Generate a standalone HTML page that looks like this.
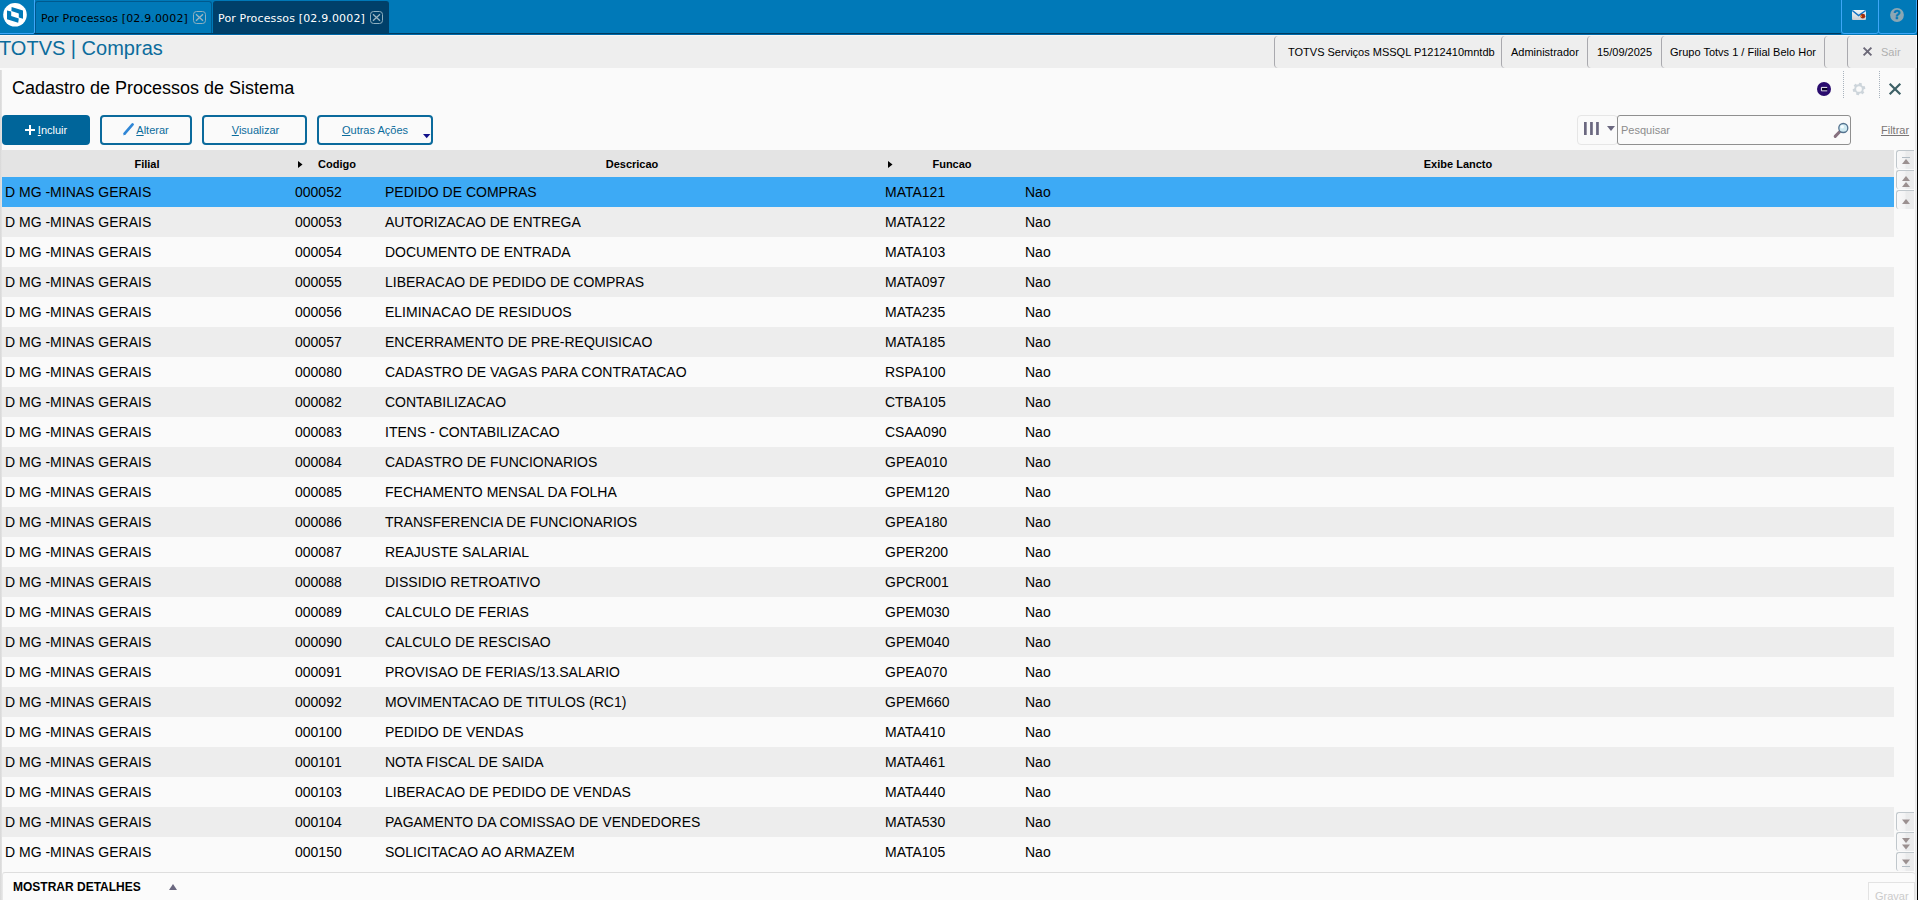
<!DOCTYPE html>
<html lang="pt-BR">
<head>
<meta charset="utf-8">
<title>TOTVS | Compras</title>
<style>
*{box-sizing:border-box;margin:0;padding:0}
html,body{width:1918px;height:900px;overflow:hidden;background:#fafafa;font-family:"Liberation Sans",sans-serif;color:#000}
.abs{position:absolute}
#topbar{position:absolute;left:0;top:0;width:1918px;height:35px;background:linear-gradient(to bottom,#0079b8 0 33px,#003c60 33px 34px,#0069a9 34px 35px)}
#logo{position:absolute;left:0;top:0;width:34px;height:33px}
.tab{position:absolute;top:1px;height:32px;width:177px;border-radius:3px 3px 0 0;font-family:"DejaVu Sans","Liberation Sans",sans-serif;font-size:11px;letter-spacing:.15px;line-height:34px;padding-left:5px;white-space:nowrap;border:1px solid transparent;border-bottom:none}
#tab1{left:35px;background:#0079b8;border-color:#005a8e;color:#000}
#tab2{left:213px;width:176px;padding-left:4px;background:#00406a;border-color:#00406a;color:#fff}
.tabx{position:absolute;left:157px;top:9px;width:13px;height:13px}
#statusbar{position:absolute;left:0;top:35px;width:1916px;height:33px;background:#eeeeee;border-top:1px solid #fbf6f3}
#brand{position:absolute;left:-1px;top:35px;font-size:20px;line-height:26px;color:#0c6c9c;white-space:nowrap}
.sb{position:absolute;top:36px;height:32px;border-left:1px solid #a9a9ae;border-radius:4px 0 0 4px;font-size:11px;line-height:32px;white-space:nowrap;color:#000}
#title{position:absolute;left:12px;top:77px;font-size:18px;line-height:22px;white-space:nowrap}
#leftedge{position:absolute;left:0;top:70px;width:2px;height:830px;background:linear-gradient(to right,#d7d7d7,#e5e5e5)}
#rightedge{position:absolute;left:1917px;top:0;width:1px;height:900px;background:#000}
#rightedge2{position:absolute;left:1915px;top:68px;width:2px;height:832px;background:linear-gradient(to right,#e6e6e6,#efefef)}
.btn{position:absolute;top:115px;height:30px;border:2px solid #0a6a9c;border-radius:4px;font-size:11px;line-height:26px;text-align:center;color:#0c6c9c;background:#fafafa;white-space:nowrap}
.btn u{text-decoration:underline}
#b1{left:2px;width:88px;background:#00659a;border-color:#00659a;color:#fff}
#b2{left:100px;width:92px}
#b3{left:202px;width:105px}
#b4{left:317px;width:116px}
#ghead{position:absolute;left:2px;top:150px;width:1892px;height:27px;background:#e4e4e4;font-weight:bold;font-size:11px;line-height:27px}
#ghead span{position:absolute;top:1px;text-align:center}
.row{position:absolute;left:2px;width:1892px;height:30px;font-size:14px;line-height:30px;background:#fafafa;white-space:nowrap}
.row.odd{background:#ededed}
.row.sel{background:#3daaf5}
.row span{position:absolute;top:0}
.c1{left:3px}.c2{left:293px}.c3{left:383px}.c4{left:883px}.c5{left:1023px}
#footer{position:absolute;left:2px;top:872px;width:1913px;height:29px;border-top:1px solid #dedede;border-left:1px solid #e8e8e8;border-radius:3px 3px 0 0;background:#fbfbfb}
#footer b{position:absolute;left:10px;top:7px;font-size:12px;line-height:14px}
svg{position:absolute;overflow:visible}
.tb{position:absolute;top:-1px;height:35px;border:1px solid #3ea6f7;border-radius:0 0 3px 3px}
.dots{position:absolute;top:71px;width:1px;height:28px;background:repeating-linear-gradient(to bottom,#a9b3bd 0 1px,transparent 1px 2px)}
.scb{position:absolute;left:1896px;width:18px;height:19px;border-left:1px solid #c0c7cc;border-top:1px solid #c0c7cc;border-radius:3px 0 0 3px;background:linear-gradient(to right,#f9f9f9,#f3f3f4 45%,#eaebec 55%,#ececed)}
#colsel{position:absolute;left:1577px;top:115px;width:41px;height:30px;border:1px solid #e6e6e6;border-radius:4px;background:#fafafa}
#search{position:absolute;left:1617px;top:115px;width:234px;height:30px;border:1px solid #8f8f8f;border-radius:3px;background:#fafafa;font-size:11px;line-height:28px;padding-left:3px;color:#8c8c8c}
#filtrar{position:absolute;left:1881px;top:123px;font-size:11px;line-height:14px;color:#7a7676;text-decoration:underline}
#gravar{position:absolute;left:1868px;top:882px;width:47px;height:20px;border:1px solid #e3e3e3;background:#fcfcfc;font-size:11px;line-height:14px;padding:6px 0 0 6px;color:#cbcbcb}
</style>
</head>
<body>
<div id="topbar"></div>
<div id="logo" style="position:absolute;left:-1px;top:-1px;width:36px;height:35px;border:1px solid #3ea6f7;border-radius:0 0 2px 0"></div>
<svg style="left:0;top:0" width="34" height="33" viewBox="0 0 34 33"><circle cx="15" cy="14.8" r="11.8" fill="#fff"/><path d="M11.6 7 L23 10.6 L23 18.8 L18.8 17.6 L18.8 13.4 L11.4 11 Z M7 10.6 L11.2 11.6 L11.2 16 L18.8 18.5 L18.2 22.8 L7 19.2 Z" fill="#0079b8"/></svg>
<div id="tab1" class="tab">Por Processos [02.9.0002]<svg class="tabx" width="13" height="13" viewBox="0 0 13 13"><rect x=".5" y=".5" width="12" height="12" rx="3" fill="none" stroke="#8fb0c0"/><path d="M3 3.2 L10 9.8 M10 3.2 L3 9.8" stroke="#9db6c2" stroke-width="1.3" fill="none"/></svg></div>
<div id="tab2" class="tab">Por Processos [02.9.0002]<svg class="tabx" style="left:156px" width="13" height="13" viewBox="0 0 13 13"><rect x=".5" y=".5" width="12" height="12" rx="3" fill="none" stroke="#8fb0c0"/><path d="M3 3.2 L10 9.8 M10 3.2 L3 9.8" stroke="#9db6c2" stroke-width="1.3" fill="none"/></svg></div>
<div style="position:absolute;left:1841px;top:32px;width:76px;height:3px;background:#0079b8"></div>
<div class="tb" style="left:1841px;width:38px"></div>
<div class="tb" style="left:1878px;width:39px"></div>
<svg style="left:1852px;top:10px" width="14" height="10" viewBox="0 0 14 10"><defs><linearGradient id="mg" x1="0" y1="0" x2="0" y2="1"><stop offset="0" stop-color="#eef7fa"/><stop offset="1" stop-color="#c9ced3"/></linearGradient></defs><rect width="14" height="10" rx="1" fill="url(#mg)"/><path d="M.3 .5 L6.6 5.6 L13.7 .5" fill="none" stroke="#1271c2" stroke-width="1.5"/><circle cx="10.8" cy="6.2" r="2.4" fill="#a22c0e"/><circle cx="9.2" cy="6.4" r=".8" fill="#f0a030"/></svg>
<svg style="left:1890px;top:8px" width="14" height="14" viewBox="0 0 14 14"><circle cx="7" cy="7" r="6.9" fill="#8ba7b4"/><text x="7" y="11" text-anchor="middle" font-family="Liberation Sans,sans-serif" font-weight="bold" font-size="12" fill="#0079b8" stroke="#0079b8" stroke-width=".5">?</text></svg>
<div id="statusbar"></div>
<div id="brand">TOTVS | Compras</div>
<div class="sb" style="left:1274px;width:228px;padding-left:13px">TOTVS Serviços MSSQL P1212410mntdb</div>
<div class="sb" style="left:1501px;width:87px;padding-left:9px">Administrador</div>
<div class="sb" style="left:1587px;width:75px;padding-left:9px">15/09/2025</div>
<div class="sb" style="left:1661px;width:164px;padding-left:8px">Grupo Totvs 1 / Filial Belo Hor</div>
<div class="sb" style="left:1824px;width:24px"></div>
<div class="sb" style="left:1847px;width:69px;padding-left:33px;color:#b0b0b0">Sair</div>
<svg style="left:1863px;top:47px" width="9" height="9" viewBox="0 0 9 9"><path d="M.6 .6 L8.4 8.4 M8.4 .6 L.6 8.4" stroke="#6b6878" stroke-width="1.9" fill="none"/></svg>
<div id="leftedge"></div>
<div id="title">Cadastro de Processos de Sistema</div>
<svg style="left:1817px;top:82px" width="14" height="14" viewBox="0 0 14 14"><circle cx="7" cy="7" r="7" fill="#2a0c6e"/><path d="M10.2 5.4 H4.4 V8.8 H10.2" fill="none" stroke="#f2f2f2" stroke-width="1"/><path d="M5 6 H10.2 V8.2 H5 Z" fill="#0a0428"/></svg>
<div class="dots" style="left:1843px"></div>
<div class="dots" style="left:1879px"></div>
<svg style="left:1852px;top:82px" width="14" height="14" viewBox="-7 -7 14 14"><g fill="#cdd5db" transform="rotate(15)"><g id="gt"><rect x="-1.5" y="-6.3" width="3" height="3" rx=".6"/><rect x="-1.5" y="3.3" width="3" height="3" rx=".6"/></g><use href="#gt" transform="rotate(60)"/><use href="#gt" transform="rotate(120)"/></g><circle r="3.8" fill="none" stroke="#cdd5db" stroke-width="1.9"/></svg>
<svg style="left:1889px;top:83px" width="12" height="12" viewBox="0 0 12 12"><path d="M.7 .7 L11.3 11.3 M11.3 .7 L.7 11.3" stroke="#3d6066" stroke-width="2.2" fill="none"/></svg>
<div id="b1" class="btn"><svg style="left:21px;top:7.5px" width="10" height="10" viewBox="0 0 10 10"><path d="M5 0V10M0 5H10" stroke="#fff" stroke-width="2" fill="none"/></svg><span style="padding-left:13px"><u>I</u>ncluir</span></div>
<div id="b2" class="btn"><svg style="left:21px;top:6px" width="12" height="13" viewBox="0 0 12 13"><path d="M1.6 10.6 L9.6 1.4" stroke="#2f86d6" stroke-width="2.7" stroke-linecap="round" fill="none"/><path d="M.4 12.4 L.9 10.2 L2.4 11.4Z" fill="#2f86d6"/></svg><span style="padding-left:13px"><u>A</u>lterar</span></div>
<div id="b3" class="btn"><span style="padding-left:2px"><u>V</u>isualizar</span></div>
<div id="b4" class="btn"><u>O</u>utras Ações<svg style="left:104px;top:17px" width="7.4" height="4.6" viewBox="0 0 8 5"><path d="M0 0H8L4 4.6Z" fill="#10108a"/></svg></div>
<div id="colsel"></div>
<svg style="left:1584px;top:122px" width="32" height="13" viewBox="0 0 32 13"><path d="M0 0h2.7v13H0zM6.1 0h2.7v13H6.1zM12.1 0h2.7v13h-2.7z" fill="#6b6880"/><path d="M23 4 L31 4 L27 9 Z" fill="#6b6880"/></svg>
<div id="search">Pesquisar</div>
<svg style="left:1832px;top:121px" width="18" height="18" viewBox="0 0 18 18"><path d="M3.2 15.4 L8.6 9.8" stroke="#87717f" stroke-width="3" stroke-linecap="round"/><circle cx="11.3" cy="7" r="4.5" fill="#cfeaf2" stroke="#54738f" stroke-width="1.3"/><circle cx="10.2" cy="5.8" r="1.8" fill="#f4fcff"/></svg>
<div id="filtrar">Filtrar</div>
<div id="ghead">
<span style="left:0;width:290px">Filial</span>
<svg style="left:296px;top:11px" width="5" height="7" viewBox="0 0 5 7"><path d="M0 0 L4.5 3.5 L0 7Z" fill="#000"/></svg><span style="left:290px;width:90px">Codigo</span>
<span style="left:380px;width:500px">Descricao</span>
<svg style="left:886px;top:11px" width="5" height="7" viewBox="0 0 5 7"><path d="M0 0 L4.5 3.5 L0 7Z" fill="#000"/></svg><span style="left:880px;width:140px">Funcao</span>
<span style="left:1020px;width:872px">Exibe Lancto</span>
</div>
<div class="row sel" style="top:177px"><span class="c1">D MG -MINAS GERAIS</span><span class="c2">000052</span><span class="c3">PEDIDO DE COMPRAS</span><span class="c4">MATA121</span><span class="c5">Nao</span></div>
<div class="row odd" style="top:207px"><span class="c1">D MG -MINAS GERAIS</span><span class="c2">000053</span><span class="c3">AUTORIZACAO DE ENTREGA</span><span class="c4">MATA122</span><span class="c5">Nao</span></div>
<div class="row" style="top:237px"><span class="c1">D MG -MINAS GERAIS</span><span class="c2">000054</span><span class="c3">DOCUMENTO DE ENTRADA</span><span class="c4">MATA103</span><span class="c5">Nao</span></div>
<div class="row odd" style="top:267px"><span class="c1">D MG -MINAS GERAIS</span><span class="c2">000055</span><span class="c3">LIBERACAO DE PEDIDO DE COMPRAS</span><span class="c4">MATA097</span><span class="c5">Nao</span></div>
<div class="row" style="top:297px"><span class="c1">D MG -MINAS GERAIS</span><span class="c2">000056</span><span class="c3">ELIMINACAO DE RESIDUOS</span><span class="c4">MATA235</span><span class="c5">Nao</span></div>
<div class="row odd" style="top:327px"><span class="c1">D MG -MINAS GERAIS</span><span class="c2">000057</span><span class="c3">ENCERRAMENTO DE PRE-REQUISICAO</span><span class="c4">MATA185</span><span class="c5">Nao</span></div>
<div class="row" style="top:357px"><span class="c1">D MG -MINAS GERAIS</span><span class="c2">000080</span><span class="c3">CADASTRO DE VAGAS PARA CONTRATACAO</span><span class="c4">RSPA100</span><span class="c5">Nao</span></div>
<div class="row odd" style="top:387px"><span class="c1">D MG -MINAS GERAIS</span><span class="c2">000082</span><span class="c3">CONTABILIZACAO</span><span class="c4">CTBA105</span><span class="c5">Nao</span></div>
<div class="row" style="top:417px"><span class="c1">D MG -MINAS GERAIS</span><span class="c2">000083</span><span class="c3">ITENS - CONTABILIZACAO</span><span class="c4">CSAA090</span><span class="c5">Nao</span></div>
<div class="row odd" style="top:447px"><span class="c1">D MG -MINAS GERAIS</span><span class="c2">000084</span><span class="c3">CADASTRO DE FUNCIONARIOS</span><span class="c4">GPEA010</span><span class="c5">Nao</span></div>
<div class="row" style="top:477px"><span class="c1">D MG -MINAS GERAIS</span><span class="c2">000085</span><span class="c3">FECHAMENTO MENSAL DA FOLHA</span><span class="c4">GPEM120</span><span class="c5">Nao</span></div>
<div class="row odd" style="top:507px"><span class="c1">D MG -MINAS GERAIS</span><span class="c2">000086</span><span class="c3">TRANSFERENCIA DE FUNCIONARIOS</span><span class="c4">GPEA180</span><span class="c5">Nao</span></div>
<div class="row" style="top:537px"><span class="c1">D MG -MINAS GERAIS</span><span class="c2">000087</span><span class="c3">REAJUSTE SALARIAL</span><span class="c4">GPER200</span><span class="c5">Nao</span></div>
<div class="row odd" style="top:567px"><span class="c1">D MG -MINAS GERAIS</span><span class="c2">000088</span><span class="c3">DISSIDIO RETROATIVO</span><span class="c4">GPCR001</span><span class="c5">Nao</span></div>
<div class="row" style="top:597px"><span class="c1">D MG -MINAS GERAIS</span><span class="c2">000089</span><span class="c3">CALCULO DE FERIAS</span><span class="c4">GPEM030</span><span class="c5">Nao</span></div>
<div class="row odd" style="top:627px"><span class="c1">D MG -MINAS GERAIS</span><span class="c2">000090</span><span class="c3">CALCULO DE RESCISAO</span><span class="c4">GPEM040</span><span class="c5">Nao</span></div>
<div class="row" style="top:657px"><span class="c1">D MG -MINAS GERAIS</span><span class="c2">000091</span><span class="c3">PROVISAO DE FERIAS/13.SALARIO</span><span class="c4">GPEA070</span><span class="c5">Nao</span></div>
<div class="row odd" style="top:687px"><span class="c1">D MG -MINAS GERAIS</span><span class="c2">000092</span><span class="c3">MOVIMENTACAO DE TITULOS (RC1)</span><span class="c4">GPEM660</span><span class="c5">Nao</span></div>
<div class="row" style="top:717px"><span class="c1">D MG -MINAS GERAIS</span><span class="c2">000100</span><span class="c3">PEDIDO DE VENDAS</span><span class="c4">MATA410</span><span class="c5">Nao</span></div>
<div class="row odd" style="top:747px"><span class="c1">D MG -MINAS GERAIS</span><span class="c2">000101</span><span class="c3">NOTA FISCAL DE SAIDA</span><span class="c4">MATA461</span><span class="c5">Nao</span></div>
<div class="row" style="top:777px"><span class="c1">D MG -MINAS GERAIS</span><span class="c2">000103</span><span class="c3">LIBERACAO DE PEDIDO DE VENDAS</span><span class="c4">MATA440</span><span class="c5">Nao</span></div>
<div class="row odd" style="top:807px"><span class="c1">D MG -MINAS GERAIS</span><span class="c2">000104</span><span class="c3">PAGAMENTO DA COMISSAO DE VENDEDORES</span><span class="c4">MATA530</span><span class="c5">Nao</span></div>
<div class="row" style="top:837px"><span class="c1">D MG -MINAS GERAIS</span><span class="c2">000150</span><span class="c3">SOLICITACAO AO ARMAZEM</span><span class="c4">MATA105</span><span class="c5">Nao</span></div>
<div class="scb" style="top:150px"><svg style="left:-1px;top:-1px" width="19" height="20"><path d="M6 14 L10 9 L14 14Z" fill="#9b9090"/><path d="M6 7.5H14" stroke="#b3bcc4" stroke-width="1"/></svg></div>
<div class="scb" style="top:170px"><svg style="left:-1px;top:-1px" width="19" height="20"><path d="M6 11 L10 6 L14 11Z" fill="#9b9090"/><path d="M6 17 L10 12 L14 17Z" fill="#9b9090"/></svg></div>
<div class="scb" style="top:190px"><svg style="left:-1px;top:-1px" width="19" height="20"><path d="M6 14 L10 9 L14 14Z" fill="#9b9090"/></svg></div>
<div class="scb" style="top:812px"><svg style="left:-1px;top:-1px" width="19" height="20"><path d="M6 7.5 L14 7.5 L10 12.5Z" fill="#9b9090"/></svg></div>
<div class="scb" style="top:832px"><svg style="left:-1px;top:-1px" width="19" height="20"><path d="M6 6 L14 6 L10 11Z" fill="#9b9090"/><path d="M6 12.5 L14 12.5 L10 17.5Z" fill="#9b9090"/></svg></div>
<div class="scb" style="top:852px"><svg style="left:-1px;top:-1px" width="19" height="20"><path d="M6 7.5 L14 7.5 L10 12.5Z" fill="#9b9090"/><path d="M6 14.5H14" stroke="#b3bcc4" stroke-width="1"/></svg></div>
<div id="footer"><b>MOSTRAR DETALHES</b><svg style="left:166px;top:11px" width="8" height="6" viewBox="0 0 8 6"><path d="M0 6 L4 0 L8 6Z" fill="#6b6880"/></svg></div>
<div id="gravar">Gravar</div>
<div id="rightedge2"></div>
<div id="rightedge"></div>
</body>
</html>
